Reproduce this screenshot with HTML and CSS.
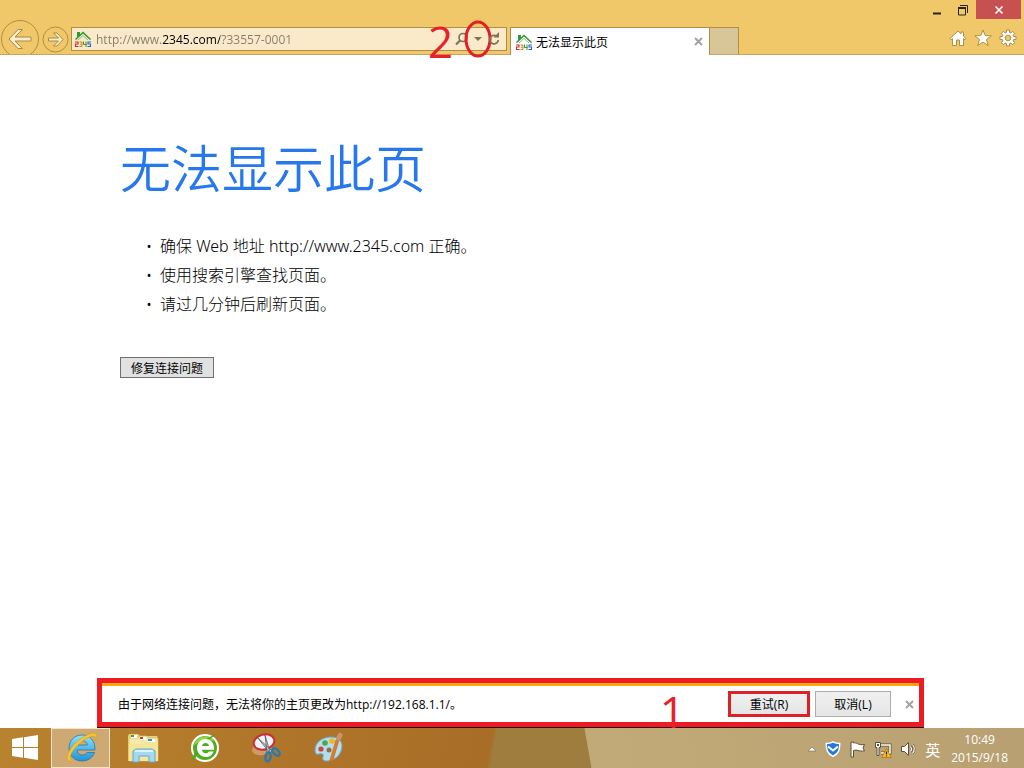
FILE: index.html
```html
<!DOCTYPE html>
<html lang="zh-CN">
<head>
    <meta charset="UTF-8">
    <meta name="viewport" content="width=device-width, initial-scale=1.0">
    <title>无法显示此页</title>

    <link rel="stylesheet" href="styles.css">
</head>

<body>
    <!-- 2345 house logo, used in the address bar and the tab -->
    <svg class="defs" width="0" height="0" aria-hidden="true">
        <symbol id="site-logo" viewBox="0 0 18 18">
            <path d="M1.500 9.500 L9 2.500 L16.500 9.500" fill="none" stroke="#2f9a35" stroke-width="1.600"/>
            <path d="M4 10 L9 5.500 L14 10" fill="none" stroke="#7fc583" stroke-width="1"/>
            <path d="M3 2h3v3l-3 2.500z" fill="#2f9a35"/>
            <path d="M1 12h3v2H1.500v2.500H4.500" fill="none" stroke="#d0312d" stroke-width="1.200"/>
            <path d="M5.500 12h2.500v4.500H5.500M6 14.200h2" fill="none" stroke="#c98a1c" stroke-width="1"/>
            <path d="M9.500 11.500v3h3M12 11.500v5.500" fill="none" stroke="#2f9a35" stroke-width="1"/>
            <path d="M17 12h-3v2h2.500v2.500h-3" fill="none" stroke="#2a62c8" stroke-width="1.100"/>
        </symbol>
    </svg>

    <header class="chrome">
        <div class="titlebar">
            <button class="win-btn" aria-label="最小化">
                <svg width="12" height="12"><path d="M2 9.500h8" stroke="#2b2212" stroke-width="2"/></svg>
            </button>
            <button class="win-btn" aria-label="还原">
                <svg width="12" height="12" fill="none" stroke="#2b2212"><path d="M1.500 4v7h7V4" /><path d="M1 4h8" stroke-width="2"/><path d="M3 1.500h7.500V9"/></svg>
            </button>
            <button class="win-btn close" aria-label="关闭">
                <svg width="10" height="10"><path d="M1.500 1.500l7 7M8.500 1.500l-7 7" stroke="#fff" stroke-width="1.600"/></svg>
            </button>
        </div>

        <div class="navbar">
            <button class="nav-btn" aria-label="后退">
                <svg width="40" height="40">
                    <circle cx="20" cy="20" r="18.500" fill="#f0c869" stroke="#b08e45"/>
                    <path d="M9 20 L18 10.500 h4.500 L15 18 h16 v4 H15 l7.500 7.500 H18z" fill="#fbedcb" stroke="#a98843"/>
                </svg>
            </button>
            <button class="nav-btn forward" aria-label="前进">
                <svg width="27" height="27">
                    <circle cx="13.500" cy="13.500" r="12.500" fill="#f0c869" stroke="#b08e45"/>
                    <path d="M21 13.500 L15 7 h-3.500 l5 5 H6.500 v3 H16.500 l-5 5 H15z" fill="#fbedcb" stroke="#a98843"/>
                </svg>
            </button>

            <form class="address">
                <svg class="logo" width="18" height="18"><use href="#site-logo"/></svg>
                <input class="url" type="text" aria-label="地址" value="http://www.2345.com/?33557-0001">
                <button class="tool" type="button" aria-label="搜索">
                    <svg width="14" height="14" fill="none" stroke="#7d7359"><circle cx="8" cy="5.500" r="4" stroke-width="1.700"/><path d="M5 8.500L1 12.500" stroke-width="2.200"/></svg>
                </button>
                <button class="tool arrow" type="button" aria-label="显示地址列表">
                    <svg width="8" height="5"><path d="M0 0h8L4 4z" fill="#7d7359"/></svg>
                    <svg class="mark-ring" width="28" height="38"><ellipse cx="14" cy="19" rx="12" ry="17" fill="none" stroke="#e01f26" stroke-width="3"/></svg>
                </button>
                <button class="tool" type="button" aria-label="刷新">
                    <svg width="12" height="14"><path d="M8 3.800A4.300 4.300 0 1 0 10.300 8" fill="none" stroke="#7d7359" stroke-width="1.800"/><path d="M5.500 5.500H11V0z" fill="#7d7359"/></svg>
                </button>
                <span class="mark mark-two">2</span>
            </form>

            <div class="tab">
                <svg class="logo" width="18" height="18"><use href="#site-logo"/></svg>
                <span class="tab-title">无法显示此页</span>
                <button class="tab-close" aria-label="关闭选项卡">
                    <svg width="9" height="9"><path d="M1 1l7 7M8 1l-7 7" stroke="#a3a3a3" stroke-width="2"/></svg>
                </button>
            </div>
            <button class="new-tab" aria-label="新建选项卡"></button>

            <div class="tools">
                <button aria-label="主页">
                    <svg width="18" height="18"><path d="M1 9.500L9 2l3 2.800V3h2.500v4.200L17 9.500l-1 1.300-1.500-1.200V16.500h-4V11h-3v5.500h-4V9.600L2 10.800z" fill="#fff" stroke="#b08e45"/></svg>
                </button>
                <button aria-label="收藏夹">
                    <svg width="18" height="18"><path d="M9 1l2.200 5.600 6 .2-4.700 3.700 1.700 6L9 13.100l-5.200 3.400 1.700-6L.8 6.800l6-.2z" fill="#fff" stroke="#b08e45"/></svg>
                </button>
                <button aria-label="工具">
                    <svg width="18" height="18">
                        <path d="M7.500 1h3v2.300l1.400.6 1.700-1.600 2.100 2.100-1.600 1.700.6 1.400H17v3h-2.300l-.6 1.400 1.600 1.700-2.100 2.100-1.700-1.600-1.400.6V17h-3v-2.300l-1.400-.6-1.700 1.600-2.100-2.100 1.600-1.700-.6-1.400H1v-3h2.300l.6-1.400-1.600-1.700 2.100-2.100 1.700 1.600 1.400-.6z" fill="#fff" stroke="#b08e45"/>
                        <circle cx="9" cy="9" r="2.800" fill="#efc869" stroke="#b08e45"/>
                    </svg>
                </button>
            </div>
        </div>
    </header>

    <main class="page">
        <h1>无法显示此页</h1>
        <ul>
            <li>确保 Web 地址 http://www.2345.com 正确。</li>
            <li>使用搜索引擎查找页面。</li>
            <li>请过几分钟后刷新页面。</li>
        </ul>
        <button class="fix">修复连接问题</button>
    </main>

    <div class="notice" role="alert">
        <p>由于网络连接问题，无法将你的主页更改为http://192.168.1.1/。</p>
        <span class="mark mark-one">1</span>
        <button class="retry">重试(R)</button>
        <button class="cancel">取消(L)</button>
        <button class="dismiss" aria-label="关闭">
            <svg width="9" height="9"><path d="M1 1l7 7M8 1l-7 7" stroke="#a3a3a3" stroke-width="2"/></svg>
        </button>
    </div>

    <footer class="taskbar">
        <button class="start" aria-label="开始">
            <svg width="28" height="28" fill="#fff"><path d="M1 5l11-1.700V13H1zM13 3.200L27 1v12H13zM1 14h11v9.700L1 22zM13 14h14v12l-14-2.200z"/></svg>
        </button>
        <button class="app active" aria-label="Internet Explorer">
            <svg width="34" height="34">
                <defs><linearGradient id="ie" x1="0" y1="0" x2="0" y2="1"><stop offset="0" stop-color="#8fe0fb"/><stop offset="1" stop-color="#1f93d8"/></linearGradient></defs>
                <path fill-rule="evenodd" d="M18 4c-8 0-13 6-13 13s5 13 13 13c6 0 10.500-3 12.500-8.500H23c-1 1.800-2.600 2.500-4.600 2.500-3.200 0-5.200-2-5.400-5h18C31.500 10 26 4 18 4zM13 14c.6-2.800 2.500-4.300 5.300-4.300s4.500 1.500 5 4.300z" fill="url(#ie)" stroke="#2377ac" stroke-width=".8"/>
                <path d="M5 30c-5-3 1-14 10-21S31 .5 32.500 4c.6 1.500.1 3.500-1 5.500.5-2.500.2-4-1.500-4.300-3.500-.6-10 3.300-15.500 8.300C8 19.500 4 26.500 8 29.500c-1 .8-2 .9-3 .5z" fill="#f7c62d" stroke="#cf9616" stroke-width=".5"/>
            </svg>
        </button>
        <button class="app" aria-label="文件资源管理器">
            <svg width="34" height="32">
                <path d="M2 4l1-2h9l2 2h17l1 3v22H2z" fill="#e9d27c"/>
                <path d="M3 6h9l2-2h7l1 2h10v23H3z" fill="#f7e9a9" stroke="#d9bb62" stroke-width=".7"/>
                <path d="M5 3h6v3H5zM14 5h6v3h-6zM22 7h7v3h-7z" fill="#fff"/>
                <path d="M5 3h3v2H5z" fill="#31a447"/><path d="M14 5h3v2h-3z" fill="#d13a2e"/><path d="M22 7h4v2h-4z" fill="#2c94cf"/>
                <path d="M3 12h14l2-2h13v19H3z" fill="#f5e596"/>
                <path d="M7 30V19l3-2h16l3 2v11h-6v-6H13v6z" fill="#a5d9f3" stroke="#63a8cf"/>
                <path d="M9 19h18" stroke="#def5ff" stroke-width="2"/>
            </svg>
        </button>
        <button class="app" aria-label="浏览器">
            <svg width="32" height="32">
                <circle cx="16" cy="16" r="13" fill="#51ad20" stroke="#fff" stroke-width="2"/>
                <path d="M5 13a12 12 0 0 1 21-4C18 7 11 9 5 13z" fill="#8cd849"/>
                <path d="M3 29C5 18 14 5 29 2c-8 4-19 12-21 21-1 3-3 5-5 6z" fill="#4bab1d"/>
                <path fill-rule="evenodd" d="M16.500 7C11 7 8 11.500 8 16s3.500 9 9 9c3.500 0 6.500-2 7.700-5.500H20c-.7 1.200-1.700 1.800-3.200 1.800-2.200 0-3.700-1.300-3.800-3.500h12C25.500 11.500 22 7 16.500 7zM13 14c.4-2 1.700-3 3.600-3s3.100 1 3.500 3z" fill="#fff"/>
            </svg>
        </button>
        <button class="app" aria-label="截图工具">
            <svg width="34" height="34">
                <ellipse cx="12" cy="18" rx="10" ry="6" fill="#cf9a68" transform="rotate(-10 12 18)"/>
                <ellipse cx="14" cy="11" rx="10.500" ry="7.500" fill="#f5f3f5" stroke="#cc2c32" stroke-width="2" transform="rotate(-15 14 11)"/>
                <path d="M7 6l15 14-2 2zM15 4l5 17-3 1z" fill="#c8d3dc" stroke="#4d5b66" stroke-width=".8"/>
                <ellipse cx="18" cy="26" rx="2.500" ry="4.500" fill="none" stroke="#2f78ad" stroke-width="2.500" transform="rotate(10 18 26)"/>
                <ellipse cx="26" cy="21" rx="2.500" ry="4.500" fill="none" stroke="#2f78ad" stroke-width="2.500" transform="rotate(-45 26 21)"/>
            </svg>
        </button>
        <button class="app" aria-label="画图">
            <svg width="34" height="34">
                <path d="M3 19C3 11 11 6 19 6c7 0 11 4 11 9 0 8-7 15-15 15-4 0-5-2-4-4 1-3-1-4-4-3s-4-1-4-4z" fill="#b7dcee" stroke="#6fa8c8"/>
                <circle cx="9" cy="18" r="2.600" fill="#d8403a"/><circle cx="13" cy="12" r="2.800" fill="#49ab42"/><circle cx="20" cy="10" r="2.800" fill="#efb52b"/><circle cx="17" cy="19" r="2.500" fill="#8b7444"/>
                <path d="M27 9l-3 0-6 20c0 2 2 2 3 0z" fill="#e07e22" stroke="#b55f14" stroke-width=".6"/>
                <path d="M24 9c0-3 1-5 4-8 0 2 1 1 3 2-1 2-1 5-4 7z" fill="#c9966c"/>
            </svg>
        </button>

        <div class="tray">
            <button aria-label="显示隐藏的图标"><svg width="10" height="6"><path d="M1 5L5 1l4 4z" fill="#fff" stroke="#7a6a49" stroke-width=".6"/></svg></button>
            <button aria-label="电脑管家">
                <svg width="16" height="16"><path d="M8 .8c2 1.300 4 1.700 6.800 1.700 0 6-1 10-6.800 12.800C2.200 12.500 1.200 8.500 1.200 2.500 4 2.500 6 2.100 8 .8z" fill="#2878d8" stroke="#fff" stroke-width="1.400"/><path d="M3 5.500l5 4 5-4" fill="none" stroke="#fff" stroke-width="2"/></svg>
            </button>
            <button aria-label="操作中心">
                <svg width="17" height="17"><path d="M2 1h2.500v1C8 1 8.500 4.500 15.500 3.500L14 7l1.500 3C10 11 8 8 4.500 9.500V16H2z" fill="#fff" stroke="#5d5035"/></svg>
            </button>
            <button aria-label="网络">
                <svg width="18" height="17"><path d="M6 4h10v8H7" fill="none" stroke="#5d5035" stroke-width="3"/><path d="M6 4h10v8H7" fill="none" stroke="#fff" stroke-width="1.500"/><path d="M1.500 1.500h5v5h-1.500v8h-2v-8H1.500z" fill="#fff" stroke="#5d5035"/><path d="M3 3h2v2H3z" fill="#5d5035"/><path d="M12.500 7.500l4.800 9H7.700z" fill="#f8bd20" stroke="#a96f08" stroke-width=".7"/><path d="M12.500 10.500v3M12.500 14.500v1" stroke="#222" stroke-width="1.200"/></svg>
            </button>
            <button aria-label="音量">
                <svg width="17" height="16"><path d="M1.500 5.500h3L8.500 1.500v13l-4-4h-3z" fill="#fff" stroke="#5d5035"/><path d="M10.500 5.500q2 2.500 0 5M12.500 3.500q3.500 4.500 0 9" fill="none" stroke="#5d5035" stroke-width="2.400"/><path d="M10.500 5.500q2 2.500 0 5M12.500 3.500q3.500 4.500 0 9" fill="none" stroke="#fff" stroke-width="1.200"/></svg>
            </button>
            <button class="ime">英</button>
            <div class="clock">
                <time>10:49</time>
                <time>2015/9/18</time>
            </div>
        </div>
    </footer>
</body>
</html>
```
FILE: styles.css
```css
*{
    box-sizing: border-box;
}

body{
    margin: 0;
    min-height: 100vh;
    display: flex;
    flex-direction: column;
    background-color: #fff;
    color: #000;
    font-family: "Open Sans", "Noto Sans CJK SC", sans-serif;
    font-size: 12px;
}

button{
    padding: 0;
    border: none;
    background: none;
    color: inherit;
    font: inherit;
    cursor: pointer;
}

svg{
    display: block;
    flex: none;
}

.defs{
    position: absolute;
}

/* window frame */
.chrome{
    background-color: #f0c869;
    border-bottom: 1px solid #c5a561;
}

.titlebar{
    display: flex;
    justify-content: flex-end;
    height: 19px;
    padding-right: 3px;
}

.win-btn{
    display: grid;
    place-items: center;
    width: 26px;
}

.win-btn.close{
    width: 45px;
    background-color: #c75050;
}

.navbar{
    display: flex;
    align-items: flex-start;
    height: 35px;
}

.nav-btn{
    height: 35px;
    overflow: hidden;
    display: flex;
}

.nav-btn.forward{
    padding: 7px 0 0 2px;
}

.address{
    position: relative;
    display: flex;
    align-items: center;
    flex: 0 1 436px;
    height: 24px;
    margin: 8px 3px 0 2px;
    padding: 0 4px 0 2px;
    background-color: #faeaca;
    border: 1px solid #b08e45;
}

/* the host name is darker than the rest of the address */
.url{
    flex: 1;
    min-width: 0;
    margin-left: 4px;
    padding: 0;
    border: none;
    outline: none;
    font-family: "Open Sans", sans-serif;
    font-size: 12px;
    color: transparent;
    background-image: linear-gradient(to right, #857c69 66px, #000 66px, #000 124px, #857c69 124px);
    -webkit-background-clip: text;
    background-clip: text;
}

.tool{
    position: relative;
    display: grid;
    place-items: center;
    width: 16px;
    height: 20px;
}

.tool svg{
    overflow: visible;
}

.mark-ring{
    position: absolute;
    left: -6px;
    top: -9px;
}

.mark{
    position: absolute;
    color: #e8202a;
    font-size: 44px;
    line-height: 44px;
}

.mark-two{
    left: 356px;
    top: -9px;
}

.tab{
    display: flex;
    align-items: center;
    flex: 0 1 200px;
    height: 28px;
    margin-top: 8px;
    padding: 0 6px 0 4px;
    background-color: #fff;
    border: 1px solid #b08e45;
    border-bottom: none;
}

.tab-title{
    flex: 1;
    margin-left: 3px;
}

.new-tab{
    width: 29px;
    height: 27px;
    margin-top: 8px;
    background-color: #d8c598;
    border: 1px solid #b08e45;
    border-left: none;
    border-bottom: none;
}

.tools{
    display: flex;
    gap: 7px;
    margin-left: auto;
    padding: 10px 7px 0 0;
}

/* error page */
.page{
    flex: 1;
    padding: 73px 120px 0;
}

h1{
    margin: 0;
    color: #2778ec;
    font-size: 51px;
    font-weight: 350;
    line-height: 80px;
}

.page ul{
    margin: 24px 0 38px;
    padding-left: 32px;
    list-style-type: "•";
    font-family: "Noto Sans", "Noto Sans CJK SC", sans-serif;
    font-size: 16px;
    font-weight: 300;
    line-height: 29px;
}

.page li{
    padding-left: 8px;
}

.fix{
    display: block;
    width: 94px;
    height: 21px;
    background-color: #e1e1e1;
    border: 1px solid #707070;
}

/* notification bar */
.notice{
    position: relative;
    display: flex;
    align-items: center;
    height: 49px;
    margin: 0 100px 1px 97px;
    padding: 3px 5px 0 16px;
    border: 5px solid #ed1c24;
    box-shadow: inset 0 3px #ffa514, 0 1px #2a0a08;
}

.notice p{
    flex: 1;
    margin: 0;
}

.retry,
.cancel{
    height: 26px;
    background-image: linear-gradient(#f0f0f0, #e5e5e5);
}

.retry{
    width: 82px;
    border: 3px solid #e01f26;
}

.cancel{
    width: 76px;
    margin: 0 14px 0 5px;
    border: 1px solid #acacac;
}

.mark-one{
    right: 234px;
    top: 6px;
}

/* taskbar */
.taskbar{
    display: flex;
    height: 40px;
    color: #fff;
    background-image:
        linear-gradient(80deg, transparent 582px, #c2aa78 583px, #b9a072),
        linear-gradient(100deg, #b9822e, #a86d27 486px, #9e7d3f 490px);
}

.start,
.app{
    display: grid;
    place-items: center;
}

.start{
    width: 51px;
    padding-right: 2px;
}

.app{
    width: 59px;
    margin-right: 3px;
}

.app.active{
    background-color: #cfa974;
    border: 1px solid #f3e3c8;
}

.tray{
    display: flex;
    align-items: center;
    gap: 8px;
    margin-left: auto;
    padding: 2px 16px 0 0;
}

.ime{
    font-size: 15px;
}

.clock{
    display: flex;
    flex-direction: column;
    margin-left: 3px;
    line-height: 18px;
    text-align: center;
}
```
